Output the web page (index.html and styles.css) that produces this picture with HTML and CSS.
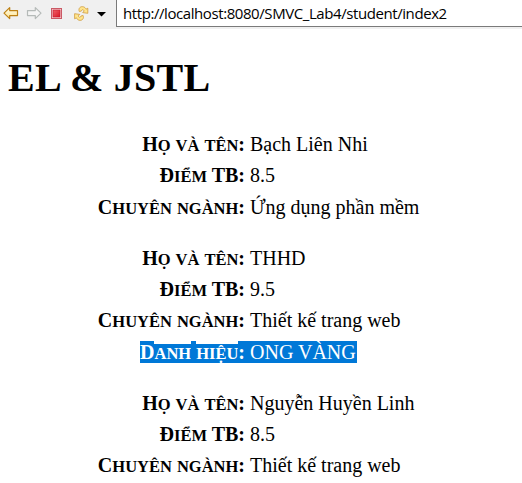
FILE: index.html
```html
<!DOCTYPE html>
<html lang="vi">
<head>
<meta charset="utf-8">
<title>EL &amp; JSTL</title>
<link rel="stylesheet" href="styles.css">
</head>
<body>
<header class="toolbar">
  <svg class="icons" width="116" height="28" viewBox="0 0 116 28" aria-hidden="true">
    <defs>
      <linearGradient id="gold" x2="0" y2="1"><stop offset="0" stop-color="#fffdf0"/><stop offset="1" stop-color="#ffe48c"/></linearGradient>
      <linearGradient id="red" x2="1" y2="1"><stop offset="0" stop-color="#f0626a"/><stop offset="1" stop-color="#d81524"/></linearGradient>
    </defs>
    <path d="M4 13.1 9.7 7.6V10.6H17.5V15.6H9.7V18.6Z" fill="url(#gold)" stroke="#bd8014" stroke-width="1.2" stroke-linejoin="round"/>
    <path d="M41 13.1 35.3 7.6V10.6H27.5V15.6H35.3V18.6Z" fill="#f4f4f4" stroke="#b5bab8" stroke-width="1.2" stroke-linejoin="round"/>
    <rect x="51.5" y="8.5" width="10" height="10" fill="#f6d5d8" stroke="#ca5965"/>
    <rect x="53" y="10" width="7" height="7" fill="url(#red)" stroke="#c91c2b" stroke-width=".7"/>
    <g fill="#ffe58c" stroke="#cf9a3c" stroke-width=".8" stroke-linejoin="round">
      <path d="M79.3 11.5C78 8.3 80.5 6 83.4 6.8 84.8 7.2 85.5 8.1 86 9.2L87.8 8.2V13.3L82.7 12.6 84.2 11C83.4 9.4 82 9 81.5 11Z"/>
      <path d="M83.1 15.5C84.4 18.7 81.9 21 79 20.2 77.6 19.8 76.9 18.9 76.4 17.8L74.6 18.8V13.7L79.7 14.4 78.2 16C79 17.6 80.4 18 80.9 16Z"/>
    </g>
    <path d="M97 12H106L101.5 16.5Z" fill="#000"/>
  </svg>
  <div class="address"><span class="url">http://localhost:8080/SMVC_Lab4/student/index2</span></div>
</header>
<main class="page">
  <h1>EL &amp; JSTL</h1>
  <dl class="student">
    <dt>H<span class="caps">ọ</span> <span class="caps">và</span> <span class="caps">tên</span>:</dt><dd>Bạch Liên Nhi</dd>
    <dt>Đ<span class="caps">iểm</span> TB:</dt><dd>8.5</dd>
    <dt>C<span class="caps">huyên</span> <span class="caps">ngành</span>:</dt><dd>Ứng dụng phần mềm</dd>
  </dl>
  <dl class="student">
    <dt>H<span class="caps">ọ</span> <span class="caps">và</span> <span class="caps">tên</span>:</dt><dd>THHD</dd>
    <dt>Đ<span class="caps">iểm</span> TB:</dt><dd>9.5</dd>
    <dt>C<span class="caps">huyên</span> <span class="caps">ngành</span>:</dt><dd>Thiết kế trang web</dd>
    <dt><span class="mark">D</span><span class="caps mark">anh</span><span class="mark"> </span><span class="caps mark">hiệu</span><span class="mark">:</span></dt><dd><span class="mark value">ONG VÀNG</span></dd>
  </dl>
  <dl class="student">
    <dt>H<span class="caps">ọ</span> <span class="caps">và</span> <span class="caps">tên</span>:</dt><dd>Nguyễn Huyền Linh</dd>
    <dt>Đ<span class="caps">iểm</span> TB:</dt><dd>8.5</dd>
    <dt>C<span class="caps">huyên</span> <span class="caps">ngành</span>:</dt><dd>Thiết kế trang web</dd>
  </dl>
</main>
</body>
</html>
```
FILE: styles.css
```css
html, body {
  margin: 0;
  height: 483px;
  overflow: hidden;
  background: #fff;
}
body {
  font: 20px/31.25px "Liberation Serif", serif;
  color: #000;
}
.toolbar {
  display: flex;
  height: 29px;
  background: #f0f0f0;
}
.icons {
  flex: none;
}
.address {
  box-sizing: border-box;
  flex: 1;
  height: 27px;
  padding-left: 6px;
  background: #fff;
  border-left: 1px solid #7a7a7a;
  border-bottom: 1px solid #7a7a7a;
  font: 15px/26px "Open Sans", sans-serif;
  white-space: nowrap;
}
.url {
  letter-spacing: -0.42px;
}
.page {
  padding: 0 8px;
}
h1 {
  margin: 26px 0 28px;
  font-size: 40px;
  line-height: 46px;
  letter-spacing: 0.25px;
}
.student {
  display: grid;
  grid-template-columns: 237px 1fr;
  column-gap: 5px;
  grid-auto-rows: 31.25px;
  margin: 0 0 20px;
}
dt {
  text-align: right;
  font-weight: bold;
}
.caps {
  font-size: 16.5px;
  line-height: 1;
  text-transform: uppercase;
}
dd {
  margin: 0;
}
.mark {
  color: #fff;
  background: #0078d7;
}
.value {
  margin-left: -5px;
  padding: 0 1px 0 5px;
}
```
